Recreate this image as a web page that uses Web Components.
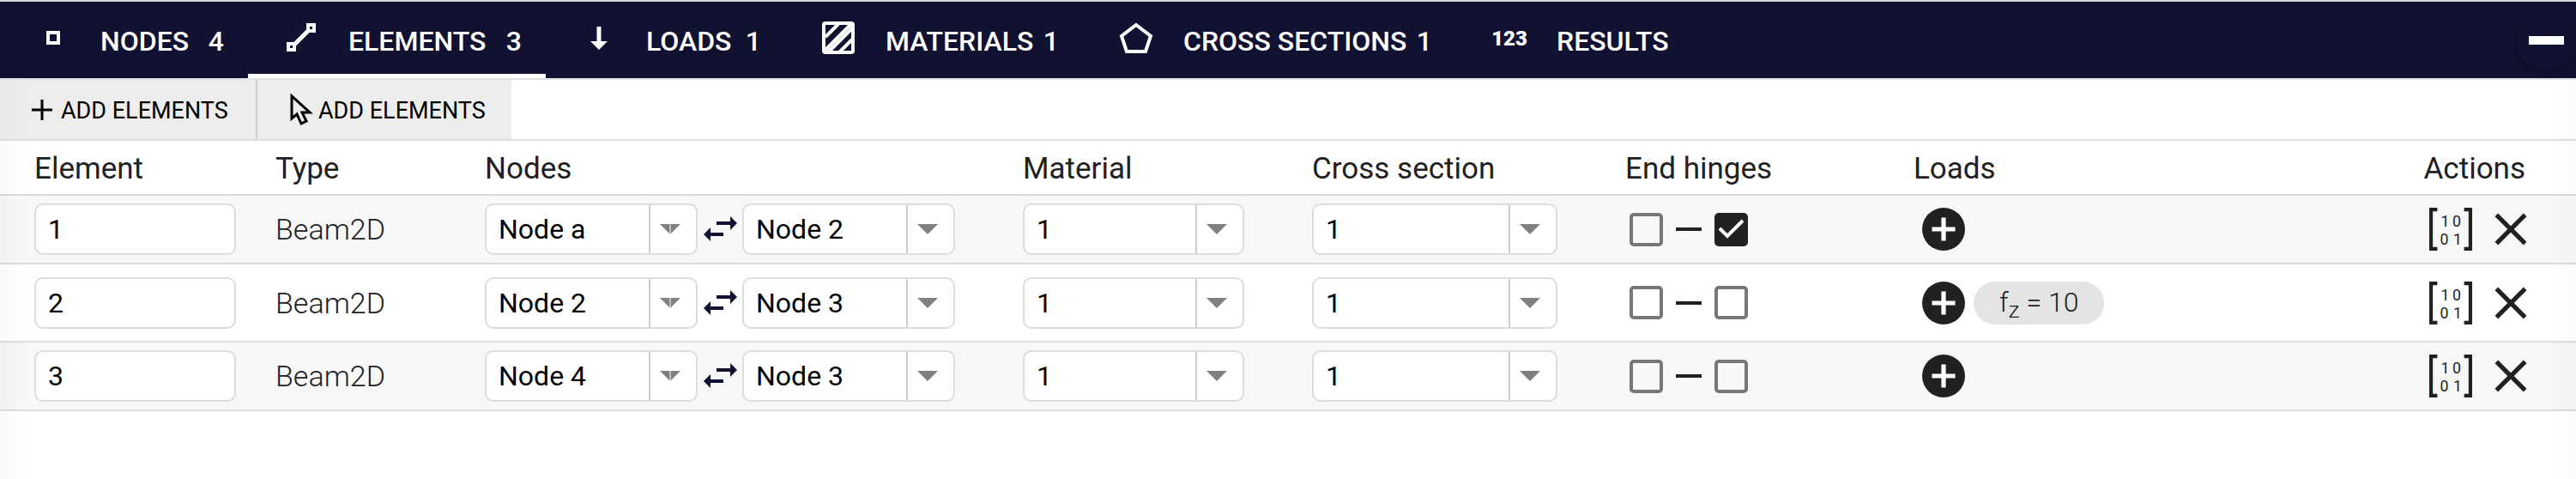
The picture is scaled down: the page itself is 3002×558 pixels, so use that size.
<!DOCTYPE html>
<html lang="en">
<head>
<meta charset="utf-8">
<title>Structure editor – Elements</title>
<style>
  html, body { margin: 0; min-height: 100%; background: #fff; }
  body { font-family: Roboto, "Liberation Sans", sans-serif; font-size: 34px; color: #212121; }
</style>
</head>
<body>
<model-panel></model-panel>

<script>
const define = (name, html, setup) => {
  const template = document.createElement('template');
  template.innerHTML = html;
  customElements.define(name, class extends HTMLElement {
    constructor() {
      super();
      this.attachShadow({ mode: 'open' }).append(template.content.cloneNode(true));
    }
    connectedCallback() { if (setup) setup(this, this.shadowRoot); }
  });
};

const icons = {
  node: '<rect x="18" y="17" width="12" height="12" stroke-width="4"/>',
  element: '<path d="M14 33 34 13" stroke-width="5"/><g fill="#111132" stroke-width="4"><rect x="9" y="30" width="7" height="7"/><rect x="32" y="8" width="7" height="7"/></g>',
  load: '<path d="M24 10V28" stroke-width="5"/><path d="M14 27H34L24 37Z" fill="currentColor" stroke="none"/>',
  material: '<rect x="7" y="6" width="34" height="34" rx="2" stroke-width="4"/><path d="M9 22 24 7M9 37 39 7M11 41 41 11M25 40 40 25" stroke-width="4"/>',
  section: '<path d="M24 8 41 21 35 39H13L7 21Z" stroke-width="4"/>',
  results: '<text x="24" y="32" text-anchor="middle" font-size="24" font-weight="900" fill="currentColor" stroke="none">123</text>',
  plus: '<path d="M24 12V36M12 24H36" stroke-width="3"/>',
  cursor: '<path d="M15 8V34L21 29L26 40L32 37L27 27H36Z" stroke-width="3"/>',
  swap: '<g fill="currentColor" stroke="none"><path d="M20 15H36V9L44 17L36 25V19H20Z"/><path d="M28 28H13V22L5 30L13 38V32H28Z"/></g>',
  add: '<circle cx="24" cy="24" r="24" fill="currentColor" stroke="none"/><path d="M24 11V37M11 24H37" stroke="#fff" stroke-width="5"/>',
  matrix: '<path d="M9 2H2V46H9M39 2H46V46H39" stroke-width="4"/><g fill="currentColor" stroke="none" font-family="Roboto, sans-serif" font-size="17"><text x="13" y="21">1</text><text x="26" y="21">0</text><text x="12" y="41">0</text><text x="27" y="41">1</text></g>',
  close: '<path d="M8 8 40 40M40 8 8 40" stroke-width="5"/>'
};

define('app-icon', `
  <style>
    :host { display: inline-flex; flex: none; width: 48px; height: 48px; }
    svg { width: 100%; height: 100%; overflow: visible; }
  </style>
  <svg viewBox="0 0 48 48" fill="none" stroke="currentColor" aria-hidden="true"></svg>`,
  (el, root) => { root.querySelector('svg').innerHTML = icons[el.getAttribute('name')]; });

define('nav-tab', `
  <style>
    :host { display: block; }
    button { display: flex; align-items: center; width: 100%; height: 100%; padding: 8px 28px 0 38px;
      border: 0; border-bottom: 5px solid transparent; background: none; color: #fff;
      font: 500 32px/40px Roboto, sans-serif; text-transform: uppercase; white-space: nowrap; cursor: pointer; }
    :host([active]) button { border-color: #fff; }
    app-icon { margin: 0 31px 6px 0; }
    .count { margin-left: auto; }
  </style>
  <button type="button" role="tab"><app-icon></app-icon><slot></slot><span class="count"></span></button>`,
  (el, root) => {
    root.querySelector('app-icon').replaceWith(Object.assign(document.createElement('template'),
      { innerHTML: `<app-icon name="${el.getAttribute('icon')}"></app-icon>` }).content);
    root.querySelector('.count').textContent = el.getAttribute('count') || '';
    root.querySelector('button').setAttribute('aria-selected', el.hasAttribute('active'));
  });

define('nav-bar', `
  <style>
    :host { display: flex; align-items: stretch; justify-content: space-between; height: 89px;
      background: #111132; border-top: 2px solid #dcdce0; border-bottom: 2px solid #e0e0e4; }
    .tabs { display: grid; grid-template-columns: 289px 347px 279px 347px 435px auto; }
    .collapse { align-self: center; display: grid; place-items: center; width: 70px; height: 70px; padding: 0;
      border: 0; border-radius: 50%; background: #111132; box-shadow: 0 4px 6px rgba(0,0,0,.3); cursor: pointer; }
    .collapse span { width: 41px; height: 10px; background: #fff; }
  </style>
  <div class="tabs" role="tablist">
    <nav-tab icon="node" count="4">Nodes</nav-tab>
    <nav-tab icon="element" count="3" active>Elements</nav-tab>
    <nav-tab icon="load" count="1">Loads</nav-tab>
    <nav-tab icon="material" count="1">Materials</nav-tab>
    <nav-tab icon="section" count="1">Cross sections</nav-tab>
    <nav-tab icon="results">Results</nav-tab>
  </div>
  <button class="collapse" type="button" aria-label="Collapse panel"><span></span></button>`);

define('tool-bar', `
  <style>
    :host { display: flex; height: 69px; border-bottom: 2px solid #dfdfdf; }
    button { display: flex; align-items: center; padding: 2px 24px 0 25px; border: 0; background: #ededed; color: #000;
      min-width: 298px; font: 400 27px/32px Roboto, sans-serif; text-transform: uppercase; white-space: nowrap; cursor: pointer; }
    button + button { border-left: 2px solid #ccc; }
    app-icon { margin: 0 -2px 2px 0; }
  </style>
  <button type="button"><app-icon name="plus"></app-icon>Add elements</button>
  <button type="button"><app-icon name="cursor"></app-icon>Add elements</button>`);

define('text-field', `
  <style>
    :host { display: block; }
    input { display: block; box-sizing: border-box; width: 100%; height: 60px; padding: 0 14px;
      border: 2px solid #ddd; border-radius: 10px; background: #fff; color: #000; font: 400 32px/40px Roboto, sans-serif; }
  </style>
  <input type="text">`,
  (el, root) => {
    const input = root.querySelector('input');
    input.value = el.getAttribute('value');
    input.setAttribute('aria-label', el.getAttribute('label'));
  });

define('select-field', `
  <style>
    :host { display: grid; grid-template-columns: 1fr 57px; }
    select { grid-area: 1 / 1 / 2 / 3; appearance: none; box-sizing: border-box; width: 100%; height: 60px; padding: 0 60px 0 14px;
      border: 2px solid #ddd; border-radius: 10px; background: #fff; color: #000; font: 400 32px/40px Roboto, sans-serif; }
    .arrow { grid-area: 1 / 2; z-index: 1; display: grid; place-items: center; margin: 2px 2px 2px 0; padding-right: 8px;
      border-left: 2px solid #ccc; pointer-events: none; }
    path { fill: #808080; }
    line { display: none; stroke: #fff; }
    :host([split]) line { display: block; }
  </style>
  <select></select>
  <span class="arrow"><svg width="24" height="12" aria-hidden="true"><path d="M0 0H24L12 12Z"/><line x1="12" x2="12" y2="12"/></svg></span>`,
  (el, root) => {
    const select = root.querySelector('select');
    select.setAttribute('aria-label', el.getAttribute('label'));
    select.replaceChildren(...el.getAttribute('options').split(',').map(o => new Option(o)));
    select.value = el.getAttribute('value');
  });

define('check-box', `
  <style>
    :host { display: inline-grid; }
    input { grid-area: 1 / 1; appearance: none; box-sizing: border-box; width: 39px; height: 39px; margin: 0;
      border: 4px solid #777; border-radius: 5px; }
    input:checked { border-color: #212121; background: #212121; }
    svg { grid-area: 1 / 1; z-index: 1; display: none; pointer-events: none; }
    input:checked + svg { display: block; }
  </style>
  <input type="checkbox">
  <svg width="39" height="39" fill="none" stroke="#fff" stroke-width="4" aria-hidden="true"><path d="M6 18 15 27 33 9"/></svg>`,
  (el, root) => {
    const input = root.querySelector('input');
    input.checked = el.hasAttribute('checked');
    input.setAttribute('aria-label', el.getAttribute('label'));
  });

define('icon-button', `
  <style>
    :host { display: inline-flex; }
    button { display: grid; padding: 0; border: 0; background: none; color: inherit; cursor: pointer; }
  </style>
  <button type="button"><slot></slot></button>`,
  (el, root) => root.querySelector('button').setAttribute('aria-label', el.getAttribute('label')));

define('load-chip', `
  <style>
    :host { display: inline-flex; }
    button { height: 50px; padding: 0 30px; border: 0; border-radius: 25px; background: #e4e4e4; color: #212121;
      font: 300 32px/48px Roboto, sans-serif; white-space: nowrap; cursor: pointer; }
    sub { font-size: 24px; line-height: 0; }
  </style>
  <button type="button"><slot></slot></button>`);

const nodeNames = 'Node a,Node 2,Node 3,Node 4';
const elements = [
  { id: 1, from: 'Node a', to: 'Node 2', end: true },
  { id: 2, from: 'Node 2', to: 'Node 3', load: 'f<sub>z</sub> = 10' },
  { id: 3, from: 'Node 4', to: 'Node 3' }
];

define('element-table', `
  <style>
    :host { display: block; }
    table { width: 100%; border-collapse: separate; border-spacing: 0; table-layout: fixed; }
    th, td { padding: 0 79px 0 0; text-align: left; border-bottom: 2px solid #dcdcdc; line-height: 40px; white-space: nowrap; }
    th, th:first-child { height: 58px; padding-top: 4px; font-size: 35px; font-weight: 400; }
    td { height: 78px; font-size: 34px; font-weight: 300; }
    tr.loaded td { height: 89px; }
    tbody tr:nth-child(odd) { background: #f7f7f7; }
    th:first-child, td:first-child { padding-left: 40px; padding-right: 46px; }
    th:nth-child(2), td:nth-child(2), th:nth-child(6), td:nth-child(6), th:nth-child(7), td:nth-child(7) { padding-right: 0; }
    th:last-child { padding-right: 59px; text-align: right; }
    td:last-child { padding-right: 51px; }
    .c1 { width: 321px; } .c2 { width: 244px; } .c3 { width: 627px; } .c4 { width: 337px; }
    .c5 { width: 365px; } .c6 { width: 336px; } .c8 { width: 240px; }
    .row { display: flex; align-items: center; }
    .nodes select-field { flex: 1; }
    .nodes icon-button { color: #111132; margin: 0 2px; }
    .hinges { gap: 15px; padding-left: 5px; }
    .hinges i { width: 30px; height: 4px; background: #212121; }
    .loads { gap: 10px; padding-left: 10px; }
    .loads app-icon { width: 50px; height: 50px; }
    .actions { gap: 20px; justify-content: flex-end; }
    .actions app-icon { width: 50px; height: 50px; }
  </style>
  <table>
    <colgroup><col class="c1"><col class="c2"><col class="c3"><col class="c4"><col class="c5"><col class="c6"><col><col class="c8"></colgroup>
    <thead><tr><th>Element</th><th>Type</th><th>Nodes</th><th>Material</th><th>Cross section</th><th>End hinges</th><th>Loads</th><th>Actions</th></tr></thead>
    <tbody>${elements.map(e => `
      <tr class="${e.load ? 'loaded' : ''}">
        <td><text-field label="Element" value="${e.id}"></text-field></td>
        <td>Beam2D</td>
        <td><div class="row nodes">
          <select-field split label="Start node" options="${nodeNames}" value="${e.from}"></select-field>
          <icon-button label="Swap nodes"><app-icon name="swap"></app-icon></icon-button>
          <select-field label="End node" options="${nodeNames}" value="${e.to}"></select-field>
        </div></td>
        <td><select-field label="Material" options="1" value="1"></select-field></td>
        <td><select-field label="Cross section" options="1" value="1"></select-field></td>
        <td><div class="row hinges"><check-box label="Hinge at start"></check-box><i></i><check-box label="Hinge at end" ${e.end ? 'checked' : ''}></check-box></div></td>
        <td><div class="row loads"><icon-button label="Add load"><app-icon name="add"></app-icon></icon-button>${e.load ? `<load-chip>${e.load}</load-chip>` : ''}</div></td>
        <td><div class="row actions">
          <icon-button label="Show matrix"><app-icon name="matrix"></app-icon></icon-button>
          <icon-button label="Delete element"><app-icon name="close"></app-icon></icon-button>
        </div></td>
      </tr>`).join('')}
    </tbody>
  </table>`);

define('model-panel', `
  <style>
    :host { display: block; }
    .content { position: relative; min-height: calc(100vh - 93px); }
    .content::after { content: ""; position: absolute; inset: 0; pointer-events: none;
      background: linear-gradient(to right, rgba(0,0,0,.02), transparent 28px),
                  linear-gradient(to left, rgba(0,0,0,.02), transparent 28px); }
  </style>
  <nav-bar></nav-bar>
  <div class="content">
    <tool-bar></tool-bar>
    <element-table></element-table>
  </div>`);
</script>
</body>
</html>
